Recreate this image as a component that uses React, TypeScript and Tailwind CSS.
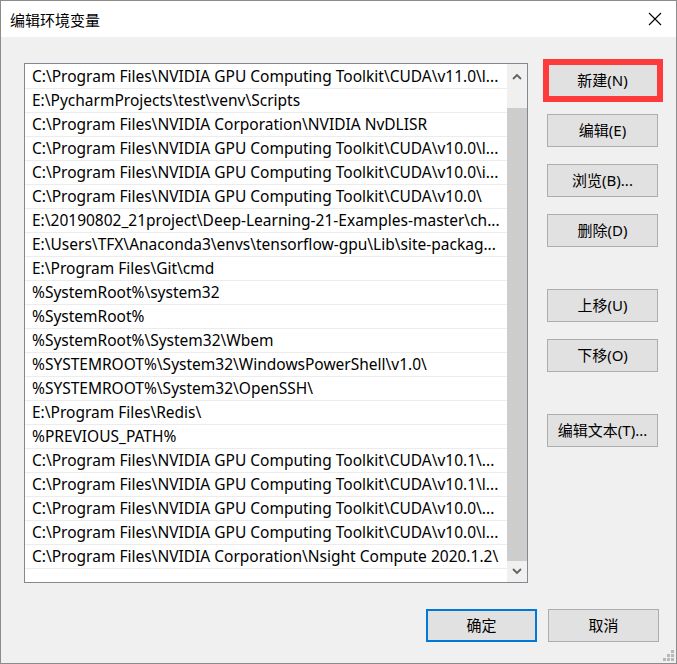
import React from "react";

const rows = [
  "C:\\Program Files\\NVIDIA GPU Computing Toolkit\\CUDA\\v11.0\\l...",
  "E:\\PycharmProjects\\test\\venv\\Scripts",
  "C:\\Program Files\\NVIDIA Corporation\\NVIDIA NvDLISR",
  "C:\\Program Files\\NVIDIA GPU Computing Toolkit\\CUDA\\v10.0\\l...",
  "C:\\Program Files\\NVIDIA GPU Computing Toolkit\\CUDA\\v10.0\\i...",
  "C:\\Program Files\\NVIDIA GPU Computing Toolkit\\CUDA\\v10.0\\",
  "E:\\20190802_21project\\Deep-Learning-21-Examples-master\\ch...",
  "E:\\Users\\TFX\\Anaconda3\\envs\\tensorflow-gpu\\Lib\\site-packag...",
  "E:\\Program Files\\Git\\cmd",
  "%SystemRoot%\\system32",
  "%SystemRoot%",
  "%SystemRoot%\\System32\\Wbem",
  "%SYSTEMROOT%\\System32\\WindowsPowerShell\\v1.0\\",
  "%SYSTEMROOT%\\System32\\OpenSSH\\",
  "E:\\Program Files\\Redis\\",
  "%PREVIOUS_PATH%",
  "C:\\Program Files\\NVIDIA GPU Computing Toolkit\\CUDA\\v10.1\\...",
  "C:\\Program Files\\NVIDIA GPU Computing Toolkit\\CUDA\\v10.1\\l...",
  "C:\\Program Files\\NVIDIA GPU Computing Toolkit\\CUDA\\v10.0\\...",
  "C:\\Program Files\\NVIDIA GPU Computing Toolkit\\CUDA\\v10.0\\l...",
  "C:\\Program Files\\NVIDIA Corporation\\Nsight Compute 2020.1.2\\",
];

function Btn({
  children,
  className = "",
  primary = false,
}: {
  children: React.ReactNode;
  className?: string;
  primary?: boolean;
}) {
  return (
    <div
      className={
        "w-[111px] h-[33px] flex items-center justify-center bg-[#e1e1e1] text-[15px] text-black " +
        (primary ? "border-2 border-[#0078d7] " : "border border-[#adadad] ") +
        className
      }
    >
      {children}
    </div>
  );
}

export default function App() {
  return (
    <div
      className="w-[677px] h-[664px] border border-[#8c8c8c] bg-[#f0f0f0] flex flex-col overflow-hidden relative"
      style={{ fontFamily: '"Noto Sans", "Noto Sans CJK SC", sans-serif' }}
    >
      {/* Title bar */}
      <div className="h-[36px] bg-white flex items-center justify-between pl-[9px] pr-[14px] shrink-0">
        <span className="text-[15px] text-black leading-none" style={{ fontFamily: '"Noto Sans CJK SC", sans-serif' }}>
          编辑环境变量
        </span>
        <svg width="14" height="14" viewBox="0 0 14 14">
          <path d="M1 1 L13 13 M13 1 L1 13" stroke="#000" strokeWidth="1.1" />
        </svg>
      </div>

      {/* Body */}
      <div className="flex-1 flex flex-col pl-[23px] pr-[17px] pt-[26px]">
        <div className="flex">
          {/* List */}
          <div className="w-[504px] h-[520px] border border-[#828790] bg-white flex">
            <div className="flex-1 pt-[1px] overflow-hidden">
              {rows.map((r, i) => (
                <div
                  key={i}
                  className="h-[24px] border-b border-[#ececec] pl-[7px] pt-[1px] flex items-center whitespace-nowrap overflow-hidden text-[15.5px] text-black leading-none"
                >
                  {r}
                </div>
              ))}
            </div>
            <div className="w-[20px] bg-[#f0f0f0] flex flex-col">
              <div className="h-[24px] flex items-center justify-center">
                <svg width="10" height="7" viewBox="0 0 10 7">
                  <path d="M1 6 L5 2 L9 6" stroke="#606060" strokeWidth="1.8" fill="none" />
                </svg>
              </div>
              <div className="flex-1 pt-[20px] flex flex-col">
                <div className="flex-1 bg-[#cdcdcd]" />
              </div>
              <div className="h-[21px] flex items-center justify-center">
                <svg width="10" height="7" viewBox="0 0 10 7">
                  <path d="M1 1 L5 5 L9 1" stroke="#606060" strokeWidth="1.8" fill="none" />
                </svg>
              </div>
            </div>
          </div>

          {/* Right buttons */}
          <div className="ml-[19px] pt-[1px] flex flex-col">
            <div className="relative">
              <Btn>新建(N)</Btn>
              <div className="absolute left-[-4px] top-[-5px] w-[120px] h-[43px] border-[6px] border-[#ff3a3a]" />
            </div>
            <Btn className="mt-[17px]">编辑(E)</Btn>
            <Btn className="mt-[17px]">浏览(B)...</Btn>
            <Btn className="mt-[17px]">删除(D)</Btn>
            <Btn className="mt-[42px]">上移(U)</Btn>
            <Btn className="mt-[17px]">下移(O)</Btn>
            <Btn className="mt-[42px]">编辑文本(T)...</Btn>
          </div>
        </div>

        {/* Bottom buttons */}
        <div className="mt-[26px] flex justify-end gap-[11px]">
          <Btn primary>确定</Btn>
          <Btn>取消</Btn>
        </div>
      </div>

      {/* Resize grip */}
      <svg width="12" height="12" viewBox="0 0 12 12" className="absolute right-[1px] bottom-[1px]">
        <rect x="8" y="0" width="3" height="3" fill="#b8b8b8" />
        <rect x="4" y="4" width="3" height="3" fill="#b8b8b8" />
        <rect x="8" y="4" width="3" height="3" fill="#b8b8b8" />
        <rect x="0" y="8" width="3" height="3" fill="#b8b8b8" />
        <rect x="4" y="8" width="3" height="3" fill="#b8b8b8" />
        <rect x="8" y="8" width="3" height="3" fill="#b8b8b8" />
      </svg>
    </div>
  );
}
